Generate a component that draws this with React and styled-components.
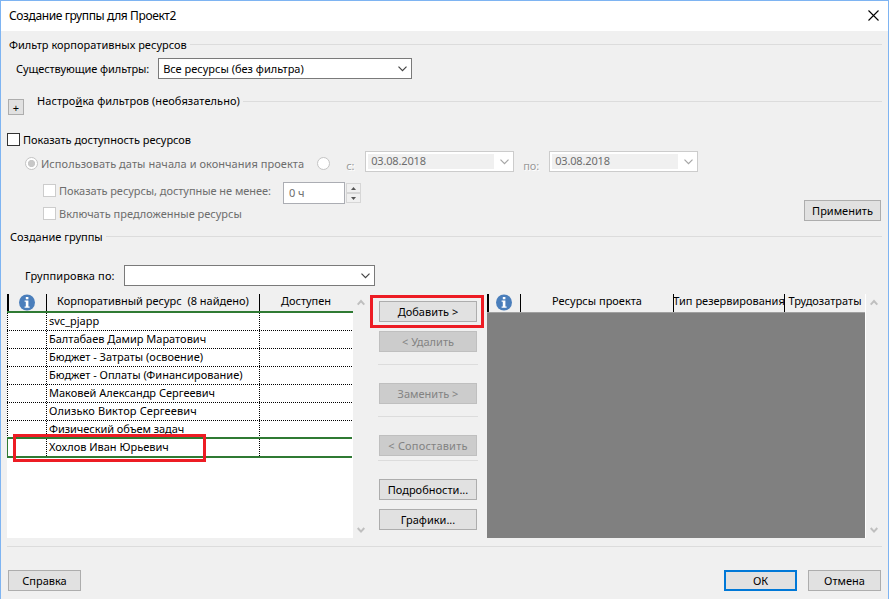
import React from "react";
import styled, { createGlobalStyle, css } from "styled-components";

const resources = [
  { name: "svc_pjapp" },
  { name: "Балтабаев Дамир Маратович" },
  { name: "Бюджет - Затраты (освоение)" },
  { name: "Бюджет - Оплаты (Финансирование)" },
  { name: "Маковей Александр Сергеевич" },
  { name: "Олизько Виктор Сергеевич", spacing: 0.12 },
  { name: "Физический объем задач", spacing: -0.05 },
  { name: "Хохлов Иван Юрьевич", selected: true, marked: true },
];

function Chevron({ color = "#444" }) {
  return (
    <svg width="9" height="6" viewBox="0 0 9 6">
      <path d="M0.5 0.7 L4.5 4.7 L8.5 0.7" fill="none" stroke={color} strokeWidth="1.2" />
    </svg>
  );
}

function ScrollArrow({ down }) {
  return (
    <svg width="8" height="7" viewBox="0 0 8 7">
      <path
        d={down ? "M0.7 1 L4 4.6 L7.3 1" : "M0.7 5.6 L4 2 L7.3 5.6"}
        fill="none"
        stroke="#bfbfbf"
        strokeWidth="2"
      />
    </svg>
  );
}

function InfoIcon() {
  return (
    <svg width="16" height="17" viewBox="0 0 16 17">
      <circle cx="8" cy="8.5" r="8" fill="#4a7ebb" />
      <rect x="6.8" y="3" width="2.6" height="2.3" fill="#fff" />
      <path d="M5.6 6.6h3.8v6h1.2v1.2H5.6v-1.2h1.2V7.8H5.6z" fill="#fff" />
    </svg>
  );
}

export default function App() {
  return (
    <>
      <GlobalStyle />
      <Dialog>
        <TitleBar>
          <Title>Создание группы для Проект2</Title>
          <svg width="11" height="11" viewBox="0 0 11 11">
            <path d="M0.5 0.5 L10.5 10.5 M10.5 0.5 L0.5 10.5" stroke="#000" strokeWidth="1.1" />
          </svg>
        </TitleBar>

        <Heading $height={27} $left={8}>
          <Text $spacing={0.02}>Фильтр корпоративных ресурсов</Text>
        </Heading>
        <FieldRow $left={15}>
          <Text $spacing={-0.09}>Существующие фильтры:</Text>
          <Select $width={254}>
            <Text>Все ресурсы (без фильтра)</Text>
            <Chevron />
          </Select>
        </FieldRow>

        <ExpandRow>
          <PlusButton>+</PlusButton>
          <Heading $height={14} $left={13}>
            <Text $spacing={0.07}>
              Настро<u>й</u>ка фильтров (необязательно)
            </Text>
          </Heading>
        </ExpandRow>

        <OptionRow $height={23} $left={6}>
          <Checkbox />
          <Text $spacing={-0.03}>Показать доступность ресурсов</Text>
        </OptionRow>
        <Availability>
          <Options>
            <OptionRow $height={25} $left={24}>
              <Radio $checked />
              <DimText $spacing={0.05}>Использовать даты начала и окончания проекта</DimText>
              <Radio $gap={13} />
              <DateLabel $gap={13} $width={19}>с:</DateLabel>
              <DateSelect>
                <DateValue>03.08.2018</DateValue>
                <Chevron color="#a5a5a5" />
              </DateSelect>
              <DateLabel $gap={6} $width={26}>по:</DateLabel>
              <DateSelect>
                <DateValue>03.08.2018</DateValue>
                <Chevron color="#a5a5a5" />
              </DateSelect>
            </OptionRow>
            <OptionRow $height={29} $left={42}>
              <Checkbox $disabled />
              <DimText $spacing={-0.05}>Показать ресурсы, доступные не менее:</DimText>
              <HoursInput>0 ч</HoursInput>
              <Spinner>
                <SpinButton>
                  <svg width="5" height="3"><path d="M0 3 L2.5 0 L5 3z" fill="#555" /></svg>
                </SpinButton>
                <SpinButton>
                  <svg width="5" height="3"><path d="M0 0 L2.5 3 L5 0z" fill="#555" /></svg>
                </SpinButton>
              </Spinner>
            </OptionRow>
            <OptionRow $height={17} $left={42}>
              <Checkbox $disabled />
              <DimText>Включать предложенные ресурсы</DimText>
            </OptionRow>
          </Options>
          <Button $width={77}>Применить</Button>
        </Availability>

        <Heading $height={29} $left={9}>
          <Text>Создание группы</Text>
        </Heading>
        <GroupRow $left={24}>
          <Text $spacing={0.14}>Группировка по:</Text>
          <Select $width={251}>
            <span />
            <Chevron />
          </Select>
        </GroupRow>

        <Panels>
          <ResourceTable>
            <HeaderRow $columns="39px 213px 93px" $line="2px solid #2f7a33">
              <IconHeaderCell><InfoIcon /></IconHeaderCell>
              <HeaderCell>Корпоративный ресурс&nbsp; (8 найдено)</HeaderCell>
              <HeaderCell>Доступен</HeaderCell>
            </HeaderRow>
            {resources.map((resource) => (
              <ResourceRow key={resource.name} $selected={resource.selected}>
                <Cell />
                <Cell>
                  <Text $spacing={resource.spacing}>{resource.name}</Text>
                </Cell>
                <Cell />
                {resource.marked && <RowMark />}
              </ResourceRow>
            ))}
          </ResourceTable>
          <Scrollbar>
            <ScrollArrow />
            <ScrollArrow down />
          </Scrollbar>

          <Actions>
            <MarkedAction>
              <Button $width={98}>Добавить &gt;</Button>
            </MarkedAction>
            <Button $width={98} $top={9} disabled>&lt; Удалить</Button>
            <Separator $top={12} />
            <Button $width={98} $top={18} disabled>Заменить &gt;</Button>
            <Separator $top={12} />
            <Button $width={98} $top={18} $spacing={0.2} disabled>&lt; Сопоставить</Button>
            <Separator $top={4} />
            <Button $width={98} $top={18}>Подробности...</Button>
            <Button $width={98} $top={9}>Графики...</Button>
          </Actions>

          <ProjectTable>
            <HeaderRow $columns="33px 153px 111px 81px" $line="1px solid #a0a0a0">
              <IconHeaderCell><InfoIcon /></IconHeaderCell>
              <HeaderCell>Ресурсы проекта</HeaderCell>
              <HeaderCell>Тип резервирования</HeaderCell>
              <HeaderCell>Трудозатраты</HeaderCell>
            </HeaderRow>
          </ProjectTable>
          <Scrollbar>
            <ScrollArrow />
            <ScrollArrow down />
          </Scrollbar>
        </Panels>

        <Footer>
          <Button $width={73}>Справка</Button>
          <FooterRight>
            <Button $width={73} $primary>ОК</Button>
            <Button $width={73}>Отмена</Button>
          </FooterRight>
        </Footer>
      </Dialog>
    </>
  );
}

const GlobalStyle = createGlobalStyle`
  *, *::before, *::after {
    box-sizing: border-box;
  }
  body {
    margin: 0;
    font-family: "Noto Sans", "Open Sans", sans-serif;
    font-size: 11px;
    line-height: 14px;
    color: #000;
    overflow: hidden;
  }
  svg {
    display: block;
    flex-shrink: 0;
  }
`;

const Dialog = styled.div`
  width: 889px;
  height: 599px;
  display: flex;
  flex-direction: column;
  background: #f0f0f0;
  border: 1px solid #7eb4f2;
  border-bottom: none;
`;

const TitleBar = styled.div`
  height: 30px;
  flex-shrink: 0;
  display: flex;
  align-items: center;
  justify-content: space-between;
  padding: 0 9px 1px 8px;
  background: #fff;
`;

const Title = styled.span`
  font-size: 12px;
  letter-spacing: -0.39px;
`;

const Text = styled.span`
  white-space: nowrap;
  letter-spacing: ${({ $spacing = 0 }) => $spacing}px;
`;

const DimText = styled(Text)`
  color: #6d6d6d;
`;

const Heading = styled.div`
  flex-shrink: 0;
  display: flex;
  align-items: center;
  height: ${({ $height }) => $height}px;
  margin-left: ${({ $left }) => $left}px;
  margin-right: 6px;

  &::after {
    content: "";
    flex: 1;
    height: 1px;
    margin-left: 3px;
    background: #dcdcdc;
  }
`;

const FieldRow = styled.div`
  display: flex;
  align-items: center;
  gap: 9px;
  height: 21px;
  flex-shrink: 0;
  margin-left: ${({ $left }) => $left}px;
`;

const GroupRow = styled(FieldRow)`
  margin-top: 14px;
`;

const Select = styled.div`
  width: ${({ $width }) => $width}px;
  height: 21px;
  display: flex;
  align-items: center;
  justify-content: space-between;
  padding: 0 4px;
  background: #fff;
  border: 1px solid #7a7a7a;
`;

const ExpandRow = styled.div`
  display: flex;
  align-items: flex-start;
  height: 49px;
  flex-shrink: 0;
  padding: 15px 0 0 7px;

  ${Heading} {
    flex: 1;
  }
`;

const PlusButton = styled.div`
  width: 16px;
  height: 16px;
  margin-top: 5px;
  border: 1px solid #adadad;
  background: #e1e1e1;
  text-align: center;
  line-height: 16px;
`;

const OptionRow = styled.div`
  display: flex;
  align-items: center;
  height: ${({ $height }) => $height}px;
  flex-shrink: 0;
  margin-left: ${({ $left }) => $left}px;
`;

const Checkbox = styled.div`
  width: 13px;
  height: 13px;
  margin-right: 3px;
  background: #fff;
  border: 1px solid ${({ $disabled }) => ($disabled ? "#cccccc" : "#333333")};
`;

const Radio = styled.div`
  width: 13px;
  height: 13px;
  margin-left: ${({ $gap = 0 }) => $gap}px;
  margin-right: 3px;
  border: 1px solid #c4c4c4;
  border-radius: 50%;
  background: ${({ $checked }) =>
    $checked ? "radial-gradient(circle, #c8c8c8 3.3px, #fff 3.9px)" : "#fff"};
`;

const Availability = styled.div`
  display: flex;
  align-items: flex-end;
  justify-content: space-between;
  height: 71px;
  flex-shrink: 0;
  padding: 0 7px 1px 0;
`;

const Options = styled.div`
  height: 70px;
`;

const DateLabel = styled.span`
  width: ${({ $width }) => $width}px;
  margin-left: ${({ $gap }) => $gap}px;
  padding-top: 5px;
  color: #9a9a9a;
  text-shadow: 1px 1px 0 #fff;
`;

const DateSelect = styled.div`
  width: 149px;
  height: 21px;
  align-self: flex-start;
  display: flex;
  align-items: center;
  justify-content: space-between;
  padding: 0 4px 0 2px;
  background: #fff;
  border: 1px solid #cccccc;
  margin-right: 3px;
`;

const DateValue = styled.span`
  width: 126px;
  height: 15px;
  padding-left: 3px;
  background: #f0f0f0;
  color: #6d6d6d;
  letter-spacing: -0.15px;
`;

const HoursInput = styled.div`
  width: 62px;
  height: 22px;
  margin: 5px 1px 0 12px;
  padding: 3px 5px;
  background: #fff;
  border: 1px solid #abadb3;
  color: #6d6d6d;
`;

const Spinner = styled.div`
  width: 15px;
  margin-top: 5px;
`;

const SpinButton = styled.div`
  height: 10px;
  display: flex;
  align-items: center;
  justify-content: center;
  border: 1px solid #d6d6d6;
`;

const Button = styled.button`
  width: ${({ $width }) => $width}px;
  height: 21px;
  flex-shrink: 0;
  margin: ${({ $top = 0 }) => $top}px 0 0;
  padding: 0;
  font: inherit;
  letter-spacing: ${({ $spacing = 0 }) => $spacing}px;
  color: #000;
  background: #e1e1e1;
  border: 1px solid #adadad;
  white-space: nowrap;

  ${({ $primary }) =>
    $primary &&
    css`
      border: 2px solid #0078d7;
    `}

  &:disabled {
    color: #838383;
    background: #cccccc;
    border-color: #bfbfbf;
  }
`;

const Panels = styled.div`
  display: flex;
  height: 244px;
  flex-shrink: 0;
  margin: 8px 6px 0;
`;

const ResourceTable = styled.div`
  width: 346px;
  background: #fff;
`;

const ProjectTable = styled.div`
  width: 379px;
  margin-left: 10px;
  background: #808080;
  border-right: 1px solid #fff;
`;

const HeaderRow = styled.div`
  display: grid;
  grid-template-columns: ${({ $columns }) => $columns};
  height: 19px;
  background: #f0f0f0;
  border-bottom: ${({ $line }) => $line};
`;

const HeaderCell = styled.div`
  display: flex;
  justify-content: center;
  white-space: nowrap;
  border-left: 1px solid #000;
`;

const IconHeaderCell = styled(HeaderCell)`
  padding-right: 2px;
  border-left-width: 2px;
`;

const Cell = styled.div`
  padding: 1px 0 0 2px;
  white-space: nowrap;
  border-left: 1px dotted #000;
`;

const ResourceRow = styled.div`
  position: relative;
  display: grid;
  grid-template-columns: 39px 213px 93px;
  width: 345px;
  height: 18px;
  border-bottom: 1px dotted #000;

  /* the selection frame covers the line of the row above */
  ${({ $selected }) =>
    $selected &&
    css`
      height: 21px;
      margin-top: -2px;
      border: 2px solid #2f7a33;
      border-width: 2px 0;

      ${Cell}:first-child {
        border-left: 1px solid #2f7a33;
      }
    `}
`;

const RowMark = styled.div`
  position: absolute;
  left: 6px;
  top: -5px;
  width: 193px;
  height: 28px;
  border: 3px solid #ed1c24;
`;

const Scrollbar = styled.div`
  width: 15px;
  display: flex;
  flex-direction: column;
  align-items: center;
  justify-content: space-between;
  padding: 5px 0 4px;
`;

const Actions = styled.div`
  width: 98px;
  margin-left: 11px;
  padding-top: 7px;
  display: flex;
  flex-direction: column;
`;

const MarkedAction = styled.div`
  position: relative;
  height: 21px;

  &::after {
    content: "";
    position: absolute;
    left: -9px;
    top: -6px;
    width: 114px;
    height: 33px;
    border: 3px solid #ed1c24;
  }

  ${Button} {
    display: block;
  }
`;

const Separator = styled.div`
  height: 1px;
  flex-shrink: 0;
  margin: ${({ $top }) => $top}px -1px 0;
  background: #dcdcdc;
`;

const Footer = styled.div`
  display: flex;
  justify-content: space-between;
  margin: 8px 6px 0;
  padding: 23px 1px 0;
  border-top: 1px solid #dcdcdc;
`;

const FooterRight = styled.div`
  display: flex;
  gap: 11px;
`;
